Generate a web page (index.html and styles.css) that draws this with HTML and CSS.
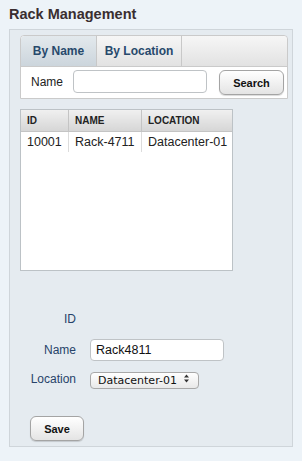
FILE: index.html
```html
<!DOCTYPE html>
<html lang="en">
<head>
  <meta charset="UTF-8">
  <title>Rack Management</title>
  <link rel="stylesheet" href="styles.css">
</head>
<body>
  <h1 class="title">Rack Management</h1>
  <div class="panel">
    <div class="tabs">
      <div class="tab-bar">
        <div class="tab active">By Name</div>
        <div class="tab">By Location</div>
      </div>
      <div class="tab-body">
        <label class="search-label">Name</label>
        <input class="text-input search-input" type="text">
        <button class="btn search-btn">Search</button>
      </div>
    </div>

    <div class="grid">
      <table class="racks">
        <thead>
          <tr>
            <th class="col-id">ID</th>
            <th class="col-name">NAME</th>
            <th class="col-loc">LOCATION</th>
          </tr>
        </thead>
        <tbody>
          <tr>
            <td>10001</td>
            <td>Rack-4711</td>
            <td>Datacenter-01</td>
          </tr>
        </tbody>
      </table>
    </div>

    <div class="form">
      <div class="form-row row-id">
        <span class="form-label">ID</span>
        <span></span>
      </div>
      <div class="form-row row-name">
        <span class="form-label">Name</span>
        <input class="text-input name-input" type="text" value="Rack4811">
      </div>
      <div class="form-row row-loc">
        <span class="form-label">Location</span>
        <div class="select-wrap">
          <select class="loc-select">
            <option>Datacenter-01</option>
          </select>
          <svg class="select-arrow" width="7" height="9" viewBox="0 0 7 9">
            <path d="M3.5 0.5 L6 3.5 H1 Z M3.5 8.5 L6 5.5 H1 Z" fill="#333"/>
          </svg>
        </div>
      </div>
    </div>

    <button class="btn save-btn">Save</button>
  </div>
</body>
</html>
```

FILE: styles.css
```css
/* Rack management page */
body {
  margin: 0;
  background-color: #edf3f8;
  font-family: "Liberation Sans", Arial, sans-serif;
  color: #222;
}

.title {
  margin: 0;
  padding: 6px 0 0 9px;
  height: 23px;
  font-size: 14.5px;
  font-weight: bold;
  color: #3a2e30;
}

.panel {
  box-sizing: border-box;
  width: 284px;
  height: 418px;
  margin-left: 9px;
  padding: 5px 6px 0 10px;
  background-color: #e5ebf0;
  border: 1px solid #cfd5da;
}

/* Tabs */
.tabs {
  width: 266px;
  border: 1px solid #cacaca;
  border-radius: 4px 4px 0 0;
  background-color: #fff;
}

.tab-bar {
  display: flex;
  height: 30px;
  background: linear-gradient(#f6f6f6, #e2e2e2);
  border-bottom: 1px solid #cacaca;
  border-radius: 4px 4px 0 0;
}

.tab {
  display: flex;
  align-items: center;
  justify-content: center;
  font-size: 12px;
  font-weight: bold;
  color: #27496c;
  border-right: 1px solid #c8c8c8;
}

.tab:first-child {
  width: 75px;
  border-radius: 4px 0 0 0;
}

.tab:nth-child(2) {
  width: 84px;
}

.tab.active {
  background: linear-gradient(#e3e9ed, #ccd5dc);
}

.tab-body {
  display: flex;
  align-items: flex-start;
  height: 31px;
  padding-left: 10px;
}

.search-label {
  font-size: 12px;
  width: 42px;
  margin-top: 8px;
}

.text-input {
  box-sizing: border-box;
  border: 1px solid #bfc3c6;
  border-radius: 4px;
  background-color: #fff;
  font-family: "Liberation Sans", Arial, sans-serif;
  outline: none;
}

.search-input {
  width: 134px;
  height: 23px;
  margin-top: 3px;
  margin-right: 12px;
}

.btn {
  box-sizing: border-box;
  height: 25px;
  padding: 0;
  font-family: "Liberation Sans", Arial, sans-serif;
  font-size: 11px;
  font-weight: bold;
  color: #111;
  background: linear-gradient(#ffffff, #e4e4e4);
  border: 1px solid #a4a4a4;
  border-radius: 6px;
  box-shadow: 0 1px 1px rgba(0, 0, 0, 0.15);
}

.search-btn {
  width: 65px;
  margin-top: 3px;
}

/* Grid */
.grid {
  box-sizing: border-box;
  width: 213px;
  height: 162px;
  margin-top: 10px;
  background-color: #fff;
  border: 1px solid #bcc2c6;
}

.racks {
  border-collapse: collapse;
  width: 100%;
}

.racks th {
  height: 21px;
  padding: 0 0 0 6px;
  text-align: left;
  font-size: 10px;
  font-weight: bold;
  color: #222;
  background: linear-gradient(#f0f0f0, #d6d6d6);
  border-bottom: 1px solid #c4c4c4;
  border-right: 1px solid #c4c4c4;
}

.racks th:last-child {
  border-right: none;
}

.col-id {
  width: 41px;
}

.col-name {
  width: 66px;
}

.racks td {
  height: 20px;
  padding: 0 0 0 6px;
  font-size: 12.5px;
  color: #222;
  border-right: 1px solid #dcdcdc;
}

.racks td:last-child {
  border-right: none;
}

/* Form */
.form {
  margin-top: 37px;
}

.form-row {
  display: grid;
  grid-template-columns: 56px auto;
  column-gap: 14px;
  align-items: center;
}

.form-label {
  text-align: right;
  font-size: 12px;
  color: #27436a;
}

.row-id {
  height: 22px;
}

.row-name {
  height: 22px;
  margin-top: 9px;
}

.name-input {
  width: 134px;
  height: 22px;
  padding-left: 5px;
  font-size: 12.5px;
  color: #111;
}

.row-loc {
  height: 17px;
  margin-top: 9px;
}

.select-wrap {
  position: relative;
  width: 109px;
  height: 17px;
}

.loc-select {
  appearance: none;
  -webkit-appearance: none;
  box-sizing: border-box;
  width: 109px;
  height: 17px;
  padding: 0 0 0 7px;
  font-family: "DejaVu Sans", sans-serif;
  font-size: 11px;
  color: #111;
  background: linear-gradient(#ffffff, #e8e8e8);
  border: 1px solid #a8a8a8;
  border-radius: 4px;
}

.select-arrow {
  position: absolute;
  right: 9px;
  top: 4px;
}

.save-btn {
  width: 54px;
  margin-top: 29px;
  margin-left: 10px;
}
```
